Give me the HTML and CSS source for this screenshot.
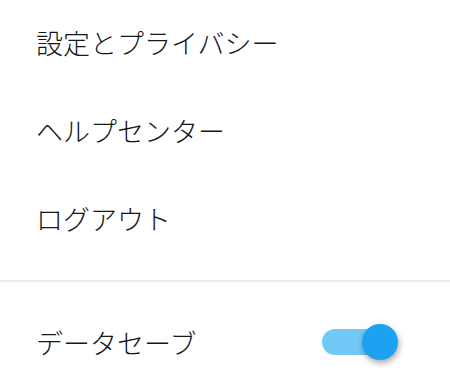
FILE: index.html
```html
<!DOCTYPE html>
<html lang="ja">
<head>
<meta charset="utf-8">
<link rel="stylesheet" href="styles.css">
</head>
<body>
<div class="menu">
  <div class="section">
    <div class="item">設定とプライバシー</div>
    <div class="item">ヘルプセンター</div>
    <div class="item">ログアウト</div>
  </div>
  <div class="toggle-row">
    <span class="label">データセーブ</span>
    <span class="switch"><span class="track"></span><span class="knob"></span></span>
  </div>
</div>
</body>
</html>
```

FILE: styles.css
```css
html, body {
  margin: 0;
  padding: 0;
  background: #ffffff;
}
body {
  width: 450px;
  height: 386px;
  overflow: hidden;
  font-family: "Noto Sans CJK JP", "Noto Sans", sans-serif;
  font-weight: 300;
  color: #14171a;
}
.menu {
  display: flex;
  flex-direction: column;
  margin-top: -2px;
}
.section {
  padding-bottom: 18px;
  border-bottom: 2px solid #e6ecf0;
}
.item {
  height: 88px;
  display: flex;
  align-items: center;
  padding-left: 36px;
  font-size: 27px;
  line-height: 1;
}
.toggle-row {
  height: 120px;
  display: flex;
  align-items: center;
  justify-content: space-between;
  padding-left: 36px;
  padding-right: 52px;
  font-size: 27px;
  line-height: 1;
}
.switch {
  position: relative;
  width: 76px;
  height: 36px;
  display: block;
}
.track {
  position: absolute;
  left: 0;
  top: 5px;
  width: 66px;
  height: 26px;
  border-radius: 13px;
  background: #71c9f8;
}
.knob {
  position: absolute;
  right: 0;
  top: 0;
  width: 36px;
  height: 36px;
  border-radius: 50%;
  background: #1da1f2;
  box-shadow: 1px 3px 6px rgba(0, 0, 0, 0.35);
}
```
